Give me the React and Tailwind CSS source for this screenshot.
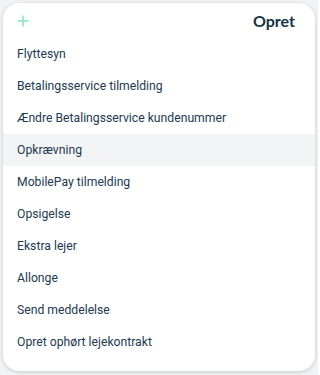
import React from "react";

const items = [
  "Flyttesyn",
  "Betalingsservice tilmelding",
  "Ændre Betalingsservice kundenummer",
  "Opkrævning",
  "MobilePay tilmelding",
  "Opsigelse",
  "Ekstra lejer",
  "Allonge",
  "Send meddelelse",
  "Opret ophørt lejekontrakt",
];

export default function App() {
  return (
    <div className="w-[318px] h-[375px] bg-[#f2f3f5] overflow-hidden" style={{ fontFamily: "Roboto, 'Noto Sans', sans-serif" }}>
      <div className="pt-[3px] px-[3px]">
        <div className="w-[312px] h-[368px] bg-white rounded-[16px] shadow-[0_1px_4px_rgba(0,0,0,0.18)] flex flex-col">
          <div className="h-[35px] flex items-center justify-between pl-[14px] pr-[20px]">
            <svg width="12" height="12" viewBox="0 0 12 12">
              <path d="M6 0.5V11.5M0.5 6H11.5" stroke="#86e6bd" strokeWidth="1.5" />
            </svg>
            <span className="text-[16px] font-bold text-[#163447]" style={{ fontFamily: "Lato, 'Noto Sans', sans-serif" }}>
              Opret
            </span>
          </div>
          <div className="flex flex-col">
            {items.map((t, i) => (
              <div
                key={t}
                className={`h-[32px] flex items-center pl-[14px] text-[12.2px] text-[#1d3a4f] ${i === 3 ? "bg-[#f3f4f6]" : ""}`}
              >
                {t}
              </div>
            ))}
          </div>
        </div>
      </div>
    </div>
  );
}
